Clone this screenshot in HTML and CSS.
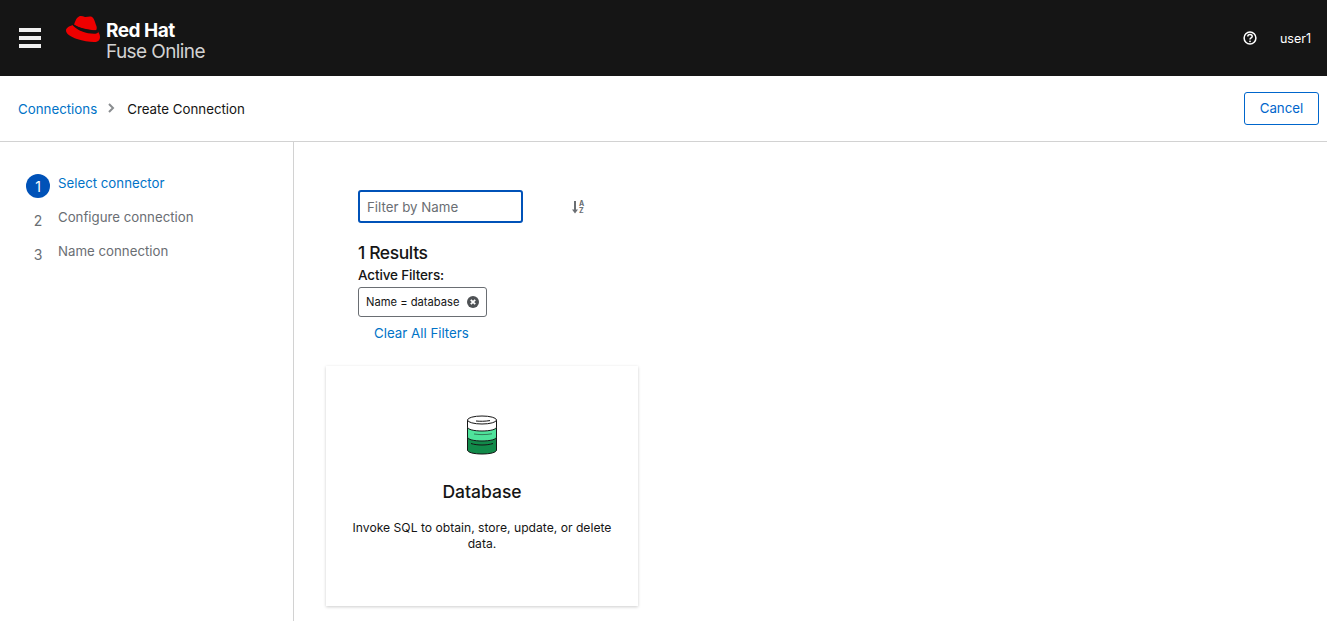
FILE: index.html
```html
<!DOCTYPE html>
<html>
<head>
    <title>Fuse Online</title>
    <meta name="viewport" content="width=device-width, initial-scale=1.0">
    <link rel="stylesheet" href="styles.css">
</head>
<body>
    <header class="masthead">
        <div class="burger">
            <span></span>
            <span></span>
            <span></span>
        </div>
        <div class="brand">
            <svg class="hat" width="35" height="28" viewBox="0 0 35 28">
                <path fill="#e00" d="M8 10C9 7 10 3 13 1.500 15 .5 17 1.500 19 2c2 .2 4-1 6-.5 3 1 4 5.500 5 8.500 1 2 1 4 0 5.500C22 15.500 13 13 8 10z"/>
                <path fill="#e00" d="M7 10C3 11 0 13 0 15.500 0 19 5 22 11 24c6 2 12 3 17 3 4 0 6-2 6-5 0-2-1-4-2-5.500-1 1-2 1.500-4 1.500-8 0-16-3-21-8z"/>
                <path fill="#151515" d="M7.500 9.300C13 12.800 22 15.300 30.500 15.300L32.200 17.200C31 18.300 30 18.700 28 18.700 20 18.700 12 15.700 6.800 10.500z"/>
            </svg>
            <div class="brand-text">
                <div class="brand-name">Red Hat</div>
                <div class="brand-product">Fuse Online</div>
            </div>
        </div>
        <div class="masthead-right">
            <svg class="help" width="14" height="14" viewBox="0 0 14 14">
                <circle cx="7" cy="7" r="5.900" fill="none" stroke="#fff" stroke-width="1.500"/>
                <path fill="none" stroke="#fff" stroke-width="1.500" d="M4.800 5.500c0-1.300 1-2 2.200-2s2.200.8 2.200 1.900c0 1.500-2.200 1.500-2.200 3.100"/>
                <circle cx="7" cy="10.300" r=".9" fill="#fff"/>
            </svg>
            <span class="username">user1</span>
        </div>
    </header>

    <div class="crumbs">
        <div class="crumb-list">
            <a class="link">Connections</a>
            <svg class="crumb-sep" width="8" height="10" viewBox="0 0 8 10">
                <path fill="none" stroke="#8a8d90" stroke-width="2" d="M2 1l4 4-4 4"/>
            </svg>
            <span>Create Connection</span>
        </div>
        <button class="cancel">Cancel</button>
    </div>

    <div class="main">
        <nav class="wizard">
            <div class="step current">
                <span class="step-num">1</span>
                <span class="step-label">Select connector</span>
            </div>
            <div class="step">
                <span class="step-num">2</span>
                <span class="step-label">Configure connection</span>
            </div>
            <div class="step">
                <span class="step-num">3</span>
                <span class="step-label">Name connection</span>
            </div>
        </nav>

        <section class="content">
            <div class="toolbar">
                <input class="filter" type="text" placeholder="Filter by Name">
                <svg class="sort" width="14" height="14" viewBox="0 0 14 14">
                    <path fill="#6a6e73" d="M3 1h2v8.500h2L4 13.500 1 9.500h2z"/>
                    <text x="8" y="6" class="sort-letter">A</text>
                    <text x="8" y="13" class="sort-letter">Z</text>
                </svg>
            </div>
            <div class="results">1 Results</div>
            <div class="active-label">Active Filters:</div>
            <div class="chip">
                <span>Name = database</span>
                <svg width="12" height="12" viewBox="0 0 12 12">
                    <circle cx="6" cy="6" r="6" fill="#4f5255"/>
                    <path stroke="#fff" stroke-width="1.800" d="M3.800 3.800l4.400 4.400M8.200 3.800l-4.400 4.400"/>
                </svg>
            </div>
            <a class="link clear">Clear All Filters</a>

            <div class="card">
                <svg class="db" width="32" height="40" viewBox="0 0 32 40">
                    <path fill="#128a4a" stroke="#151515" d="M1.500 22v13c0 2.500 6.500 4 14.500 4s14.500-1.500 14.500-4V22z"/>
                    <path fill="none" stroke="#151515" d="M5 28.500c3 1 7 1.500 11 1.500s8-.5 11-1.500"/>
                    <path fill="#4fe39b" stroke="#151515" d="M1.500 11v11c0 2.500 6.500 4 14.500 4s14.500-1.500 14.500-4V11z"/>
                    <path fill="none" stroke="#151515" stroke-opacity=".5" d="M8 19c2.500.4 5 .6 8 .6s7-.2 10-.8"/>
                    <path fill="#fff" stroke="#151515" d="M1.500 5v7c0 2.500 6.500 4 14.500 4s14.500-1.500 14.500-4V5z"/>
                    <ellipse cx="16" cy="5" rx="14.500" ry="4" fill="#fff" stroke="#151515"/>
                    <path fill="none" stroke="#151515" d="M10 6c4 .4 9 .4 14-.4"/>
                </svg>
                <h3 class="card-title">Database</h3>
                <p class="card-text">Invoke SQL to obtain, store, update, or delete data.</p>
            </div>
        </section>
    </div>
</body>
</html>
```

FILE: styles.css
```css
html, body {
    height: 100%;
    margin: 0;
    font-family: Inter, "Noto Sans", sans-serif;
    font-size: 14px;
    color: #151515;
    background-color: #fff;
    overflow: hidden;
}
body {
    display: flex;
    flex-direction: column;
}
.masthead {
    display: flex;
    align-items: center;
    height: 76px;
    flex-shrink: 0;
    padding: 0 16px 0 19px;
    box-sizing: border-box;
    background-color: #151515;
    color: #fff;
}
.burger {
    display: flex;
    flex-direction: column;
    gap: 4px;
    width: 22px;
}
.burger span {
    height: 4px;
    background-color: #f0f0f0;
}
.brand {
    display: flex;
    align-items: flex-start;
    margin-left: 25px;
}
.hat {
    margin-top: 0;
}
.brand-text {
    margin-left: 5px;
    margin-top: 5px;
}
.brand-name {
    font-size: 19px;
    line-height: 21px;
    font-weight: 700;
    letter-spacing: -0.5px;
}
.brand-product {
    font-size: 19px;
    line-height: 21px;
    color: #d2d2d2;
    letter-spacing: -0.6px;
}
.masthead-right {
    display: flex;
    align-items: center;
    margin-left: auto;
    margin-top: -1px;
}
.username {
    margin-left: 23px;
    margin-top: 1px;
    font-size: 12.500px;
}
.crumbs {
    display: flex;
    align-items: center;
    justify-content: space-between;
    height: 66px;
    flex-shrink: 0;
    padding: 0 8px 0 18px;
    box-sizing: border-box;
    border-bottom: 1px solid #d2d2d2;
}
.crumb-list {
    display: flex;
    align-items: center;
    font-size: 13.300px;
}
.crumb-sep {
    margin: -2px 12px 0 10px;
}
.link {
    color: #0073c7;
    font-size: 13.300px;
}
.cancel {
    width: 75px;
    height: 33px;
    padding: 0 0 2px;
    font-family: inherit;
    font-size: 13.300px;
    color: #0066cc;
    background-color: #fff;
    border: 1px solid #0066cc;
    border-radius: 3px;
}
.main {
    display: flex;
    flex: 1;
    min-height: 0;
}
.wizard {
    width: 294px;
    flex-shrink: 0;
    box-sizing: border-box;
    padding-top: 25px;
    padding-left: 26px;
    border-right: 1px solid #d2d2d2;
}
.step {
    display: flex;
    align-items: flex-start;
    height: 34px;
    color: #6a6e73;
    font-size: 13.250px;
}
.step-num {
    display: flex;
    align-items: center;
    justify-content: center;
    width: 24px;
    height: 24px;
    margin-top: 7px;
    border-radius: 50%;
    color: #6a6e73;
    font-size: 14px;
}
.step-label {
    margin-left: 8px;
    margin-top: 8px;
    line-height: 17px;
}
.current {
    color: #0073c7;
}
.current .step-num {
    background-color: #0052b8;
    color: #fff;
}
.content {
    flex: 1;
    padding-top: 48px;
    padding-left: 32px;
    display: flex;
    flex-direction: column;
    align-items: flex-start;
}
.toolbar {
    display: flex;
    align-items: center;
    margin-left: 32px;
}
.filter {
    width: 165px;
    height: 33px;
    box-sizing: border-box;
    padding: 0 7px;
    font-family: inherit;
    font-size: 13.300px;
    color: #151515;
    border: 2px solid #0052b8;
    border-radius: 3px;
    outline: none;
}
.filter::placeholder {
    color: #6a6e73;
}
.sort {
    margin-left: 48px;
}
.sort-letter {
    font-family: Inter, sans-serif;
    font-size: 7px;
    font-weight: 700;
    fill: #6a6e73;
}
.results {
    margin-left: 32px;
    margin-top: 19px;
    font-size: 17.500px;
    line-height: 22px;
    font-weight: 500;
    letter-spacing: -0.4px;
}
.active-label {
    margin-left: 32px;
    margin-top: 2px;
    font-size: 13.500px;
    line-height: 18px;
    font-weight: 500;
    letter-spacing: -0.15px;
}
.chip {
    display: flex;
    align-items: center;
    justify-content: space-between;
    width: 129px;
    height: 30px;
    box-sizing: border-box;
    margin-left: 32px;
    margin-top: 3px;
    padding: 0 7px;
    border: 1px solid #6a6e73;
    border-radius: 3px;
    font-size: 11.200px;
}
.clear {
    margin-left: 48px;
    margin-top: 7px;
    line-height: 18px;
}
.card {
    width: 312px;
    height: 240px;
    box-sizing: border-box;
    margin-top: 24px;
    padding: 49px 20px 0;
    text-align: center;
    background-color: #fff;
    box-shadow: 0 1px 3px rgba(3, 3, 3, 0.2);
}
.db {
    display: block;
    margin-left: 120px;
}
.card-title {
    margin: 26px 0 0;
    font-size: 17.500px;
    line-height: 22px;
    font-weight: 500;
}
.card-text {
    margin: 17px 0 0;
    font-size: 12.150px;
    line-height: 16px;
}
```
